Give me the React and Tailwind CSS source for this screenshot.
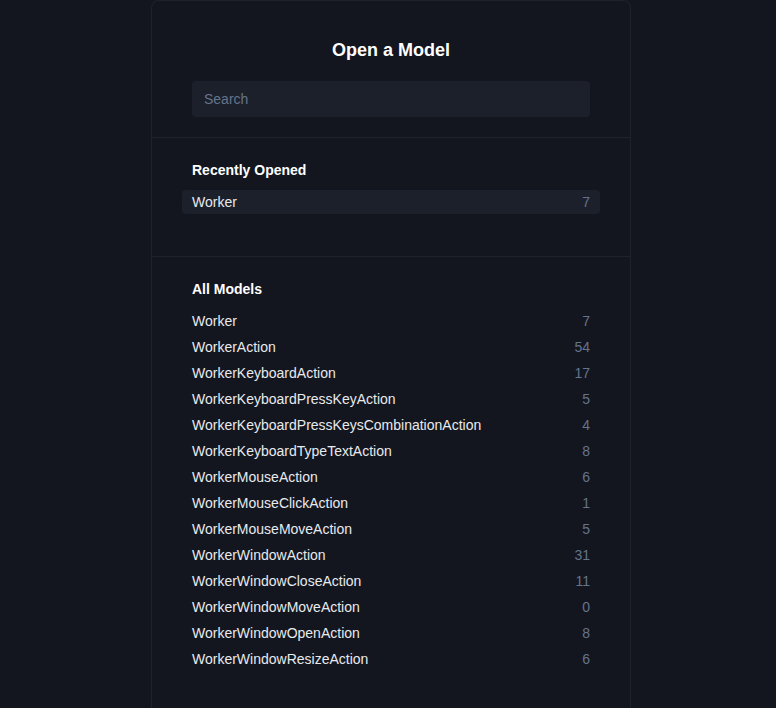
import React from "react";

const recent = [["Worker", 7]];
const all = [
  ["Worker", 7],
  ["WorkerAction", 54],
  ["WorkerKeyboardAction", 17],
  ["WorkerKeyboardPressKeyAction", 5],
  ["WorkerKeyboardPressKeysCombinationAction", 4],
  ["WorkerKeyboardTypeTextAction", 8],
  ["WorkerMouseAction", 6],
  ["WorkerMouseClickAction", 1],
  ["WorkerMouseMoveAction", 5],
  ["WorkerWindowAction", 31],
  ["WorkerWindowCloseAction", 11],
  ["WorkerWindowMoveAction", 0],
  ["WorkerWindowOpenAction", 8],
  ["WorkerWindowResizeAction", 6],
];

function Row({ name, count, active }) {
  return (
    <div
      className={
        "-mx-2.5 flex h-6 items-center justify-between rounded px-2.5 text-[14px] leading-5 " +
        (active ? "bg-[#1c202b]" : "")
      }
    >
      <span className="text-[#e8eaee]">{name}</span>
      <span className="text-[#64748b]">{count}</span>
    </div>
  );
}

export default function App() {
  return (
    <div
      className="min-h-screen bg-[#13161f] overflow-hidden"
      style={{ fontFamily: '"Liberation Sans", Arial, sans-serif' }}
    >
      <div className="ml-[151px] w-[480px] rounded-t-lg border border-b-0 border-[#1e222c] bg-[#13161f] pb-10">
        <div className="flex flex-col px-10 pt-[35px] pb-5">
          <h1 className="text-center text-[18px] font-bold leading-7 text-white">
            Open a Model
          </h1>
          <input
            autoFocus
            placeholder="Search"
            className="mt-[17px] h-9 w-full rounded bg-[#1c202b] px-3 text-[14px] text-white placeholder:text-[#64748b] outline-none caret-white"
          />
        </div>
        <div className="border-t border-[#1e222c] px-10 pt-[22px] pb-[42px]">
          <h2 className="text-[14px] font-bold leading-5 text-white">Recently Opened</h2>
          <div className="mt-2.5 flex flex-col">
            {recent.map(([n, c]) => (
              <Row key={n} name={n} count={c} active />
            ))}
          </div>
        </div>
        <div className="border-t border-[#1e222c] px-10 pt-[22px]">
          <h2 className="text-[14px] font-bold leading-5 text-white">All Models</h2>
          <div className="mt-2.5 flex flex-col gap-0.5">
            {all.map(([n, c]) => (
              <Row key={n} name={n} count={c} />
            ))}
          </div>
        </div>
      </div>
    </div>
  );
}
